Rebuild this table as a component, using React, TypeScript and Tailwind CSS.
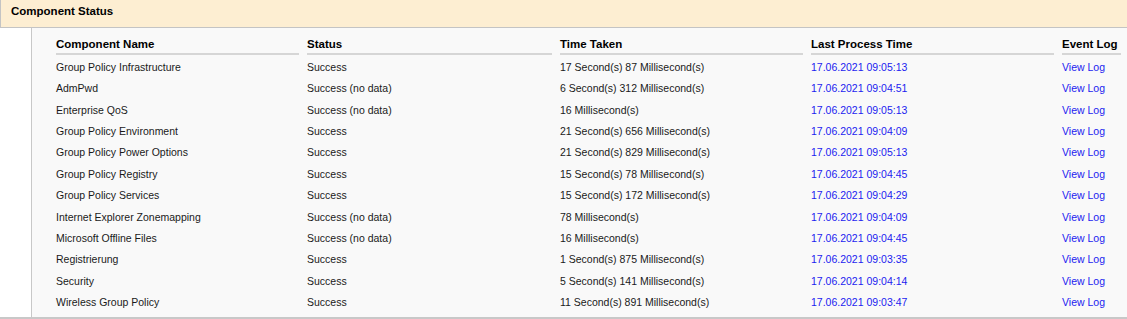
import React from "react";

type Row = {
  name: string;
  status: string;
  time: string;
  last: string;
};

const rows: Row[] = [
  { name: "Group Policy Infrastructure", status: "Success", time: "17 Second(s) 87 Millisecond(s)", last: "17.06.2021 09:05:13" },
  { name: "AdmPwd", status: "Success (no data)", time: "6 Second(s) 312 Millisecond(s)", last: "17.06.2021 09:04:51" },
  { name: "Enterprise QoS", status: "Success (no data)", time: "16 Millisecond(s)", last: "17.06.2021 09:05:13" },
  { name: "Group Policy Environment", status: "Success", time: "21 Second(s) 656 Millisecond(s)", last: "17.06.2021 09:04:09" },
  { name: "Group Policy Power Options", status: "Success", time: "21 Second(s) 829 Millisecond(s)", last: "17.06.2021 09:05:13" },
  { name: "Group Policy Registry", status: "Success", time: "15 Second(s) 78 Millisecond(s)", last: "17.06.2021 09:04:45" },
  { name: "Group Policy Services", status: "Success", time: "15 Second(s) 172 Millisecond(s)", last: "17.06.2021 09:04:29" },
  { name: "Internet Explorer Zonemapping", status: "Success (no data)", time: "78 Millisecond(s)", last: "17.06.2021 09:04:09" },
  { name: "Microsoft Offline Files", status: "Success (no data)", time: "16 Millisecond(s)", last: "17.06.2021 09:04:45" },
  { name: "Registrierung", status: "Success", time: "1 Second(s) 875 Millisecond(s)", last: "17.06.2021 09:03:35" },
  { name: "Security", status: "Success", time: "5 Second(s) 141 Millisecond(s)", last: "17.06.2021 09:04:14" },
  { name: "Wireless Group Policy", status: "Success", time: "11 Second(s) 891 Millisecond(s)", last: "17.06.2021 09:03:47" },
];

const headers = ["Component Name", "Status", "Time Taken", "Last Process Time", "Event Log"];

export default function App() {
  return (
    <div
      className="w-[1127px] h-[319px] bg-white text-[10.5px] text-[#1a1a1a] overflow-hidden"
      style={{ fontFamily: '"Liberation Sans", Arial, sans-serif' }}
    >
      {/* section header */}
      <div className="h-[28px] bg-[#fdeed2] border-l border-b border-[#c4c4c4] flex items-start pt-[3px] pl-[10px]">
        <span className="font-bold text-[11.5px] text-black leading-[16px]">Component Status</span>
      </div>

      {/* body */}
      <div className="flex h-[291px] border-b-2 border-[#c8c8c8]">
        <div className="w-[31px] bg-white" />
        <div className="flex-1 bg-[#f9f9f9] border-l border-[#c8c8c8] pl-[22px] pt-[8px]">
          <div className="grid grid-cols-[251px_253px_251px_251px_1fr] h-[19px] items-center">
            {headers.map((h) => (
              <div key={h} className="pl-[2px] pr-[4px] h-full flex flex-col">
                <span className="font-bold text-[11.5px] text-black leading-[16px]">{h}</span>
                <div className="mt-auto h-[2px] bg-[#d6d6d6] mr-[2px]" />
              </div>
            ))}
          </div>
          <div className="pt-[2px]">
            {rows.map((r) => (
              <div
                key={r.name}
                className="grid grid-cols-[251px_253px_251px_251px_1fr] h-[21.4px] items-center"
              >
                <div className="pl-[2px]">{r.name}</div>
                <div className="pl-[2px]">{r.status}</div>
                <div className="pl-[2px]">{r.time}</div>
                <div className="pl-[2px] text-[#1c1cf0]">{r.last}</div>
                <div className="pl-[2px] text-[#1c1cf0]">View Log</div>
              </div>
            ))}
          </div>
        </div>
      </div>
    </div>
  );
}
